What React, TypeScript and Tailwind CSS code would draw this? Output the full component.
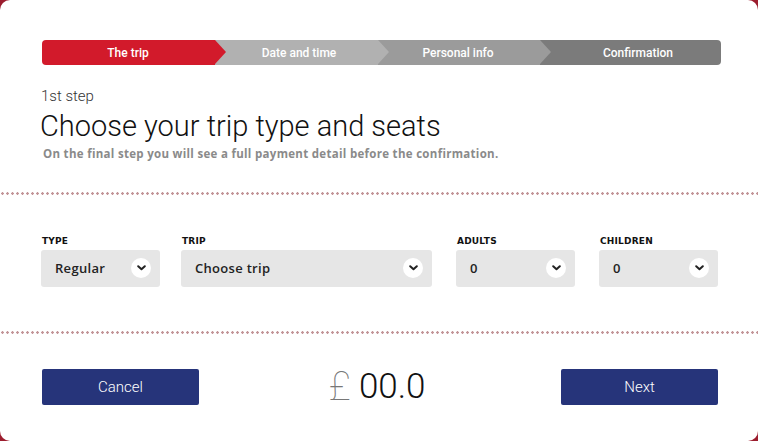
import React from 'react';

const steps = [
  { label: 'The trip', bg: 'bg-[#d21a2b]', arrow: 'border-l-[#d21a2b]', w: 'w-[173px]', pad: 'pr-[1px]' },
  { label: 'Date and time', bg: 'bg-[#b1b1b1]', arrow: 'border-l-[#b1b1b1]', w: 'w-[163px]', pad: 'pl-[5px]' },
  { label: 'Personal info', bg: 'bg-[#9b9b9b]', arrow: 'border-l-[#9b9b9b]', w: 'w-[162px]', pad: 'pr-[2px]' },
  { label: 'Confirmation', bg: 'bg-[#7b7b7b]', arrow: '', w: 'flex-1', pad: 'pl-[15px]' },
];

function Chevron() {
  return (
    <span className="w-5 h-5 rounded-full bg-white flex items-center justify-center shrink-0">
      <svg width="9" height="6" viewBox="0 0 9 6">
        <path d="M1.2 1.2 L4.5 4.3 L7.8 1.2" fill="none" stroke="#222" strokeWidth="2" strokeLinecap="round" strokeLinejoin="round" />
      </svg>
    </span>
  );
}

function Field({ label, value, w }: { label: string; value: string; w: string }) {
  return (
    <div className={`${w} shrink-0 flex flex-col`}>
      <div className="text-[9px] font-extrabold tracking-[0.2px] text-[#111] mb-[1px] pl-[1px] font-['DejaVu_Sans',sans-serif]">{label}</div>
      <div className="h-[37px] rounded-[3px] bg-[#e6e6e6] flex items-center justify-between pl-[14px] pr-[9px]">
        <span className="text-[13px] font-semibold tracking-[0.3px] text-[#222] font-['Open_Sans',sans-serif]">{value}</span>
        <Chevron />
      </div>
    </div>
  );
}

function Dots() {
  return <div className="h-[3px] w-full bg-[radial-gradient(circle,#c39598_1.1px,transparent_1.5px)] bg-[length:5px_3px]" />;
}

export default function App() {
  return (
    <div className="w-[758px] h-[441px] bg-[#9c1d2e] font-['Roboto',sans-serif]">
      <div className="w-full h-full bg-white rounded-[10px] flex flex-col">
        <div className="px-[42px] pt-[40px]">
          <div className="flex h-[25px] w-[679px] rounded-[4px] overflow-hidden">
            {steps.map((s, i) => (
              <div key={s.label} className={`relative ${s.w} ${s.bg} flex items-center justify-center`} style={{ zIndex: 10 - i }}>
                <span className={`text-[12px] font-medium text-white ${s.pad}`}>{s.label}</span>
                {s.arrow && (
                  <span className={`absolute left-full top-0 w-0 h-0 border-y-[12.5px] border-y-transparent border-l-[11px] ${s.arrow}`} />
                )}
              </div>
            ))}
          </div>
        </div>

        <div className="px-[41px] pt-[22px]">
          <div className="text-[15px] font-light text-[#333] leading-[18px]">1st step</div>
          <h1 className="text-[29px] font-light text-[#111] leading-[32px] mt-[5px] -ml-[1px]">Choose your trip type and seats</h1>
          <p className="text-[11.5px] font-bold tracking-[0.3px] text-[#8a8a8a] mt-[3px] ml-[2px] font-['Open_Sans',sans-serif]">
            On the final step you will see a full payment detail before the confirmation.
          </p>
        </div>

        <div className="mt-[30px]"><Dots /></div>

        <div className="flex pl-[41px] pr-[40px] pt-[40px] pb-[44px]">
          <Field label="TYPE" value="Regular" w="w-[119px]" />
          <div className="w-[21px] shrink-0" />
          <Field label="TRIP" value="Choose trip" w="w-[251px]" />
          <div className="w-[24px] shrink-0" />
          <Field label="ADULTS" value="0" w="w-[119px]" />
          <div className="w-[24px] shrink-0" />
          <Field label="CHILDREN" value="0" w="w-[119px]" />
        </div>

        <Dots />

        <div className="flex items-center justify-between pl-[42px] pr-[40px] pt-[35px]">
          <button className="w-[157px] h-[36px] rounded-[2px] bg-[#26347a] text-white text-[15px] font-light">Cancel</button>
          <div className="h-[36px] flex items-center gap-[8px] -ml-[6px]">
            <span className="text-[40px] font-thin text-[#777] leading-none">£</span>
            <span className="text-[35px] font-light text-[#111] leading-none">00.0</span>
          </div>
          <button className="w-[157px] h-[36px] rounded-[2px] bg-[#26347a] text-white text-[15px] font-light">Next</button>
        </div>
      </div>
    </div>
  );
}
